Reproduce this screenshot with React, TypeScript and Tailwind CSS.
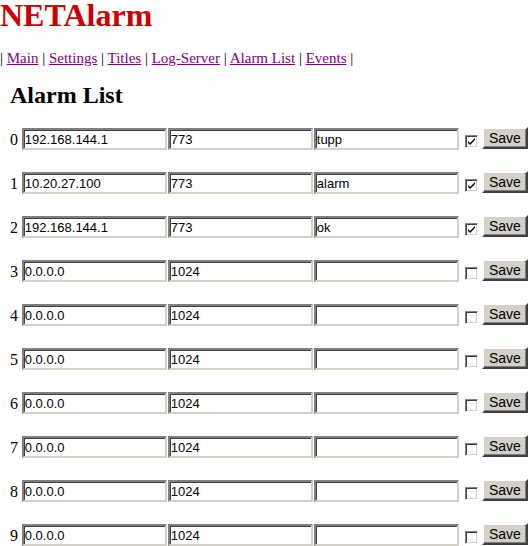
const links = ['Main', 'Settings', 'Titles', 'Log-Server', 'Alarm List', 'Events'];

const rows = [
  { ip: '192.168.144.1', port: '773', text: 'tupp', on: true },
  { ip: '10.20.27.100', port: '773', text: 'alarm', on: true },
  { ip: '192.168.144.1', port: '773', text: 'ok', on: true },
  { ip: '0.0.0.0', port: '1024', text: '', on: false },
  { ip: '0.0.0.0', port: '1024', text: '', on: false },
  { ip: '0.0.0.0', port: '1024', text: '', on: false },
  { ip: '0.0.0.0', port: '1024', text: '', on: false },
  { ip: '0.0.0.0', port: '1024', text: '', on: false },
  { ip: '0.0.0.0', port: '1024', text: '', on: false },
  { ip: '0.0.0.0', port: '1024', text: '', on: false },
];

function Field({ value }: { value: string }) {
  return (
    <input
      defaultValue={value}
      className="w-[145px] h-[22px] bg-white border-2 border-t-[#808080] border-l-[#808080] border-b-[#d4d0c8] border-r-[#d4d0c8] shadow-[inset_1px_1px_0_#404040] px-[1px] text-[13px] text-black outline-none font-['Liberation_Sans',Arial,sans-serif]"
    />
  );
}

function Check({ on }: { on: boolean }) {
  return (
    <span className="w-[13px] h-[13px] bg-white border border-t-[#808080] border-l-[#808080] border-b-white border-r-white shadow-[inset_1px_1px_0_#404040,inset_-1px_-1px_0_#d4d0c8] flex items-center justify-center">
      {on && (
        <svg width="9" height="9" viewBox="0 0 9 9">
          <path d="M1 4 L3 6 L8 1 L8 3 L3 8 L1 6 Z" fill="#000" />
        </svg>
      )}
    </span>
  );
}

export default function App() {
  return (
    <div className="min-h-screen bg-white text-black font-['Liberation_Serif','Times_New_Roman',serif]">
      <h1 className="text-[32px] leading-[30px] font-bold text-[#cc0000]">NETAlarm</h1>

      <p className="text-[15px] leading-[18px] mt-[19px]">
        |{' '}
        {links.map((l) => (
          <span key={l}>
            <a href="#" className="text-[#800080] underline">{l}</a> |{' '}
          </span>
        ))}
      </p>

      <h2 className="text-[24px] leading-[28px] font-bold pl-[10px] mt-[14px]">Alarm List</h2>

      <div className="mt-[8px]">
        {rows.map((r, i) => (
          <div key={i} className="h-[44px] flex items-center">
            <span className="w-[22px] pl-[10px] text-[16px] leading-[18px] mt-[2px]">{i}</span>
            <div className="flex gap-[1px]">
              <Field value={r.ip} />
              <Field value={r.port} />
              <Field value={r.text} />
            </div>
            <span className="ml-[6px] mt-[4px]">
              <Check on={r.on} />
            </span>
            <button className="ml-[4px] -mt-[2px] w-[47px] h-[22px] bg-[#d4d0c8] border-2 border-t-white border-l-white border-b-[#404040] border-r-[#404040] shadow-[inset_-1px_-1px_0_#808080] text-[14px] font-['Liberation_Sans',Arial,sans-serif] leading-none">
              Save
            </button>
          </div>
        ))}
      </div>
    </div>
  );
}
